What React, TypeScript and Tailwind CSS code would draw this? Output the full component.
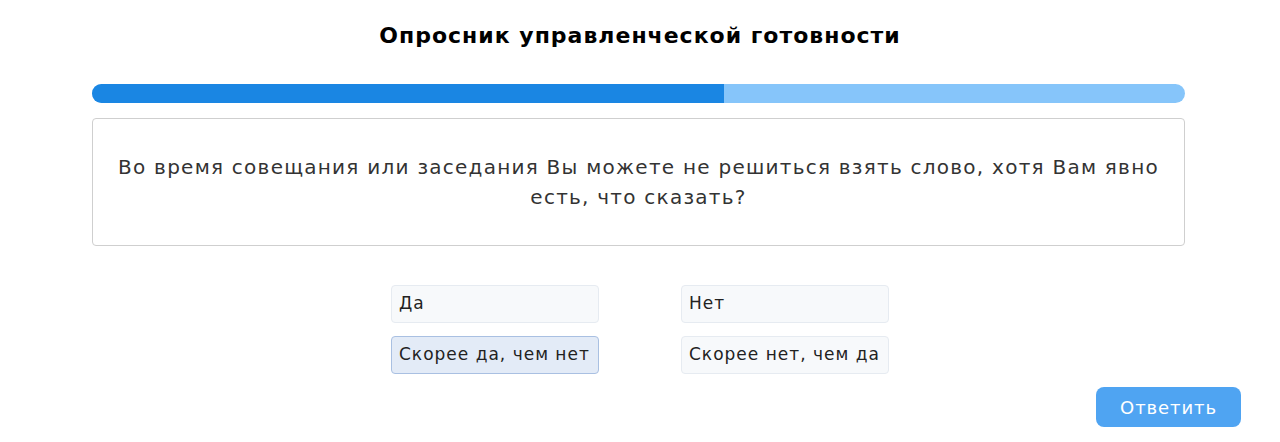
const options = [
  { id: "yes", label: "Да" },
  { id: "no", label: "Нет" },
  { id: "rather-yes", label: "Скорее да, чем нет" },
  { id: "rather-no", label: "Скорее нет, чем да" },
];

export default function App() {
  const selected = "rather-yes";
  const progress = 57.8;

  return (
    <div className="min-h-[442px] bg-white font-['DejaVu_Sans',sans-serif] text-[#222]">
      <h1 className="pt-[21px] text-center text-[22px] font-bold leading-[30px] tracking-[1px] text-black">
        Опросник управленческой готовности
      </h1>

      <div className="ml-[92px] mt-[33px] w-[1093px]">
        <div className="flex h-[19px] overflow-hidden rounded-full bg-[#86c5fa]">
          <div className="h-full bg-[#1a86e3]" style={{ width: `${progress}%` }} />
        </div>

        <div className="mt-[15px] flex h-[128px] items-center justify-center rounded border border-[#cfcfcf] px-4">
          <p className="text-center text-[20px] leading-[30px] tracking-[1.25px] text-[#333]">
            Во время совещания или заседания Вы можете не решиться взять слово, хотя Вам явно
            есть, что сказать?
          </p>
        </div>
      </div>

      <div className="mx-auto mt-[39px] grid w-[498px] grid-cols-[208px_208px] justify-between gap-y-[13px]">
        {options.map((o) => (
          <button
            key={o.id}
            type="button"
            className={
              o.id === selected
                ? "h-[38px] whitespace-nowrap rounded border border-[#a9c0e2] bg-[#e3ebf7] px-[7px] text-left text-[17px] tracking-[1px] text-[#222]"
                : "h-[38px] whitespace-nowrap rounded border border-[#e6ebf1] bg-[#f7f9fb] px-[7px] text-left text-[17px] tracking-[1px] text-[#222]"
            }
          >
            {o.label}
          </button>
        ))}
      </div>

      <div className="flex justify-end pr-[39px] pt-[13px]">
        <button
          type="button"
          className="h-[40px] w-[145px] rounded-lg bg-[#4fa4f2] text-[18px] tracking-[0.9px] text-white"
        >
          Ответить
        </button>
      </div>
    </div>
  );
}
